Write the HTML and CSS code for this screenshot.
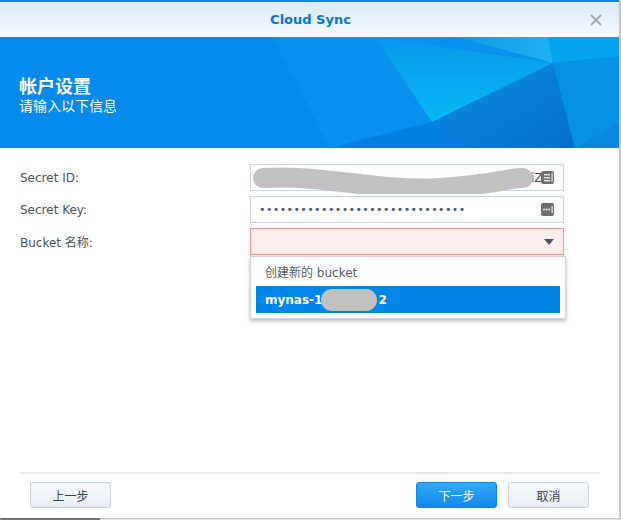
FILE: index.html
```html
<!DOCTYPE html>
<html lang="zh-CN">
<head>
<meta charset="utf-8">
<title>Cloud Sync</title>
<link rel="stylesheet" href="styles.css">
</head>
<body>
<div class="backdrop"></div>
<div class="dialog">
  <div class="titlebar">
    <span class="title">Cloud Sync</span>
    <svg class="close" width="12" height="12" viewBox="0 0 12 12"><path d="M1 1L11 11M11 1L1 11" stroke="#a2a9b0" stroke-width="1.8"/></svg>
  </div>
  <div class="banner">
    <svg class="banner-art" width="621" height="111" viewBox="0 37 621 111" preserveAspectRatio="none">
      <defs>
        <linearGradient id="cy" x1="0" y1="0" x2="0" y2="1">
          <stop offset="0" stop-color="#0996ec"/>
          <stop offset="1" stop-color="#08baf3"/>
        </linearGradient>
        <linearGradient id="dk" x1="0" y1="0" x2="1" y2="1">
          <stop offset="0" stop-color="#0a8be4"/>
          <stop offset="1" stop-color="#0470cf"/>
        </linearGradient>
        <linearGradient id="tr" x1="0" y1="0" x2="1" y2="0">
          <stop offset="0" stop-color="#0a9aec"/>
          <stop offset="1" stop-color="#21b1f1"/>
        </linearGradient>
      </defs>
      <rect x="0" y="37" width="621" height="111" fill="#048aea"/>
      <polygon points="272,37 455,37 553,63 432,122 330,148" fill="#0790ec"/>
      <polygon points="375,37 553,63 432,122" fill="url(#cy)"/>
      <polygon points="455,37 548,37 553,63" fill="url(#tr)"/>
      <polygon points="548,37 621,37 621,56 553,63" fill="#05a3ee"/>
      <polygon points="432,122 553,63 575,148 465,148" fill="url(#dk)"/>
      <polygon points="553,63 621,56 621,122 575,148" fill="#0592e4"/>
      <polygon points="575,148 621,122 621,148" fill="#0a86dc"/>
      <polygon points="330,148 432,122 465,148" fill="#0580df"/>
    </svg>
    <div class="banner-text">
      <h1>帐户设置</h1>
      <p>请输入以下信息</p>
    </div>
  </div>
  <div class="content">
    <div class="form">
      <div class="row">
        <label>Secret ID:</label>
        <div class="field">
          <span class="field-text tail">iZE</span>
          <svg class="blur" width="290" height="28" viewBox="0 0 290 28"><path d="M12,12 C 70,8 130,26 190,22 S 260,11 272,12" fill="none" stroke="#c1c1c1" stroke-width="20" stroke-linecap="round"/></svg>
          <span class="ficon"><svg width="13" height="13" viewBox="0 0 13 13"><rect x="0" y="0" width="13" height="13" rx="2" fill="#6f6f6f"/><rect x="3" y="3" width="6" height="1.4" fill="#e8e8e8"/><rect x="3" y="6" width="6" height="1.4" fill="#e8e8e8"/><rect x="3" y="9" width="6" height="1.4" fill="#e8e8e8"/><rect x="10.5" y="2" width="1.2" height="9" fill="#e8e8e8"/></svg></span>
        </div>
      </div>
      <div class="row">
        <label>Secret Key:</label>
        <div class="field">
          <span class="field-text dots">••••••••••••••••••••••••••••••</span>
          <span class="ficon"><svg width="13" height="13" viewBox="0 0 13 13"><rect x="0" y="0" width="13" height="13" rx="2" fill="#6f6f6f"/><circle cx="3" cy="6.5" r="1" fill="#f0f0f0"/><circle cx="5.6" cy="6.5" r="1" fill="#f0f0f0"/><circle cx="8.2" cy="6.5" r="1" fill="#f0f0f0"/><rect x="10.5" y="3" width="1.2" height="7" fill="#f0f0f0"/></svg></span>
        </div>
      </div>
      <div class="row">
        <label>Bucket 名称:</label>
        <div class="field invalid">
          <svg class="caret" width="10" height="6" viewBox="0 0 10 6"><path d="M0 0H10L5 6Z" fill="#4e5660"/></svg>
          <div class="menu">
            <div class="item">创建新的 bucket</div>
            <div class="item selected">mynas-1<span class="mask"></span>2</div>
          </div>
        </div>
      </div>
    </div>
  </div>
  <div class="footer">
    <button class="btn">上一步</button>
    <div class="spacer"></div>
    <button class="btn primary">下一步</button>
    <button class="btn">取消</button>
  </div>
</div>
</body>
</html>
```

FILE: styles.css
```css
html, body {
  margin: 0;
  padding: 0;
}
body {
  width: 621px;
  height: 520px;
  background: #ffffff;
  position: relative;
  overflow: hidden;
  font-family: "DejaVu Sans", Verdana, "Noto Sans CJK SC", sans-serif;
}
.backdrop {
  position: absolute;
  left: 0;
  bottom: 0;
  width: 100px;
  height: 3px;
  background: #8a8a8a;
}
.dialog {
  position: relative;
  width: 619px;
  height: 518px;
  border-right: 1px solid #c4c8cc;
  background: #ffffff;
  box-shadow: 1px 1px 2px rgba(0,0,0,0.35);
  display: flex;
  flex-direction: column;
}
.titlebar {
  height: 35px;
  border-top: 2px solid #0a86e6;
  background: linear-gradient(#d9e9f8, #f4f9fd);
  display: flex;
  align-items: center;
  justify-content: center;
  position: relative;
}
.title {
  font-weight: bold;
  font-size: 13px;
  color: #0a73d6;
  margin-left: 2px;
}
.close {
  position: absolute;
  right: 17px;
  top: 12px;
}
.banner {
  height: 111px;
  position: relative;
  overflow: hidden;
  background: #048aea;
}
.banner-art {
  position: absolute;
  left: 0;
  top: 0;
}
.banner-text {
  position: relative;
  padding: 37px 0 0 19px;
  color: #ffffff;
  font-family: "Noto Sans CJK SC", sans-serif;
}
.banner-text h1 {
  margin: 0;
  font-size: 18px;
  line-height: 22px;
  font-weight: bold;
}
.banner-text p {
  margin: 0;
  font-size: 14px;
  line-height: 18px;
}
.content {
  flex: 1;
  padding: 16px 0 0 20px;
}
.form {
  display: flex;
  flex-direction: column;
  gap: 5px;
}
.row {
  display: flex;
  align-items: center;
  height: 27px;
}
.row label {
  width: 230px;
  font-size: 12px;
  color: #4b4f54;
}
.field {
  position: relative;
  width: 312px;
  height: 25px;
  border: 1px solid #c7d2dd;
  background: #ffffff;
  display: flex;
  align-items: center;
}
.field.invalid {
  border-color: #f29595;
  background: #fdeded;
}
.field-text {
  font-size: 12px;
  color: #4b4f54;
}
.tail {
  position: absolute;
  left: 280px;
  top: 6px;
}
.blur {
  position: absolute;
  left: 0;
  top: 1px;
}
.dots {
  padding-left: 8px;
  font-size: 11px;
  letter-spacing: 0.4px;
  color: #4a5868;
}
.ficon {
  position: absolute;
  right: 9px;
  top: 6px;
  width: 13px;
  height: 13px;
  display: flex;
}
.caret {
  position: absolute;
  right: 9px;
  top: 10px;
}
.menu {
  position: absolute;
  left: -1px;
  top: 27px;
  width: 304px;
  padding: 0 5px 5px;
  background: #ffffff;
  border: 1px solid #d2d6da;
  box-shadow: 0 2px 4px rgba(0,0,0,0.3);
  z-index: 2;
}
.item {
  height: 29px;
  display: flex;
  align-items: center;
  padding-left: 9px;
  font-size: 12px;
  color: #555a60;
}
.item.selected {
  height: 27px;
  background: #0086e6;
  color: #ffffff;
  font-weight: bold;
}
.mask {
  display: inline-block;
  width: 56px;
  height: 22px;
  border-radius: 11px;
  background: #c1c1c1;
  margin: 0 1px 0 -1px;
}
.footer {
  margin: 0 19px 0 20px;
  border-top: 2px solid #e6e8ea;
  padding: 8px 11px 10px 10px;
  display: flex;
  gap: 11px;
}
.spacer {
  flex: 1;
}
.btn {
  width: 81px;
  height: 26px;
  border: 1px solid #c5d0da;
  border-radius: 3px;
  background: linear-gradient(#f6f9fc, #e9eff5);
  font-family: "Noto Sans CJK SC", sans-serif;
  font-size: 12px;
  color: #3c3f44;
  padding: 0;
}
.btn.primary {
  border-color: #1183e0;
  background: linear-gradient(#33a9f7, #1089ea);
  color: #ffffff;
}
```
